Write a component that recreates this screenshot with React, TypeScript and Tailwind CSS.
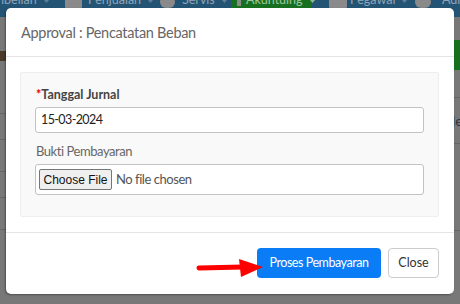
import React from "react";

function Caret() {
  return (
    <svg width="9" height="5" viewBox="0 0 10 6" className="inline-block ml-[5px]">
      <path d="M0 0 L10 0 L5 6 Z" fill="#5f7f99" />
    </svg>
  );
}

function NavText({ label }: { label: string }) {
  return (
    <div className="flex items-center -mt-[6px] text-[12.5px] leading-none text-[#8fa5b8]">
      {label}
      <Caret />
    </div>
  );
}

export default function App() {
  return (
    <div className="relative w-[460px] h-[304px] overflow-hidden bg-[#787878]" style={{ fontFamily: "Lato, 'Noto Sans', sans-serif" }}>
      {/* background page */}
      <div className="flex flex-col">
        <div className="h-[17px] bg-[#245474] flex items-start overflow-hidden">
          <div className="w-[85px] -ml-[20px] shrink-0"><NavText label="Pembelian" /></div>
          <div className="w-[23px] shrink-0"><div className="w-[17px] h-[10px] -mt-[2px] bg-[#8a8a8a] rounded-[1px]"></div></div>
          <div className="w-[72px] shrink-0"><NavText label="Penjualan" /></div>
          <div className="w-[22px] shrink-0"><div className="w-[15px] h-[12px] -mt-[4px] bg-[#8a8a8a] rounded-full"></div></div>
          <div className="w-[49px] shrink-0"><NavText label="Servis" /></div>
          <div className="w-[81px] shrink-0 h-[10px] bg-[#17701f] flex items-start pl-[6px]">
            <div className="w-[16px] h-[7px] -mt-[1px] border-[2px] border-t-0 border-[#8a8a8a] bg-[#2c7d2c]"></div>
            <div className="ml-[5px] flex items-center -mt-[6px] text-[12.5px] leading-none text-[#9fc79f]">
              Akuntuing
              <svg width="9" height="5" viewBox="0 0 10 6" className="inline-block ml-[5px]">
                <path d="M0 0 L10 0 L5 6 Z" fill="#8fb88f" />
              </svg>
            </div>
          </div>
          <div className="w-[38px] shrink-0 pl-[17px]"><div className="w-[18px] h-[10px] -mt-[2px] bg-[#8a8a8a] rounded-[1px]"></div></div>
          <div className="w-[65px] shrink-0"><NavText label="Pegawai" /></div>
          <div className="w-[27px] shrink-0"><div className="w-[16px] h-[12px] -mt-[4px] bg-[#8a8a8a] rounded-full"></div></div>
          <div className="shrink-0 -mt-[6px] text-[12.5px] leading-none text-[#8fa5b8]">Admin</div>
        </div>
        <div className="flex justify-between">
          <div className="w-[6px] flex flex-col">
            <div className="h-[34px]"></div>
            <div className="h-[10px] bg-[#4a3a2a]"></div>
            <div className="h-[52px]"></div>
            <div className="h-px bg-[#666]"></div>
            <div className="h-[25px]"></div>
            <div className="h-px bg-[#666]"></div>
            <div className="h-[31px]"></div>
            <div className="h-px bg-[#666]"></div>
            <div className="h-[25px]"></div>
            <div className="h-px bg-[#666]"></div>
            <div className="h-[31px]"></div>
            <div className="h-px bg-[#666]"></div>
          </div>
          <div className="w-[6px] flex flex-col text-[14px] text-[#333]">
            <div className="h-[23px]"></div>
            <div className="h-[30px] bg-[#17701f]"></div>
            <div className="h-[27px]"></div>
            <div className="h-px bg-[#666]"></div>
            <div className="h-[45px] flex items-center -ml-[2px]">le</div>
            <div className="h-px bg-[#666]"></div>
            <div className="h-[86px]"></div>
            <div className="h-px bg-[#666]"></div>
          </div>
        </div>
      </div>

      {/* modal */}
      <div className="absolute left-[6px] top-[8px] w-[448px] h-[286px] bg-white rounded-[5px] shadow-[-1px_1px_2px_rgba(0,0,0,0.35)] flex flex-col">
        <div className="h-[49px] border-b border-[#e5e5e5] px-[15px] flex items-center pt-[1px]">
          <span className="text-[14.5px] tracking-[-0.3px] text-[#666]">Approval : Pencatatan Beban</span>
        </div>
        <div className="pl-[14px] pr-[15px] pt-[15px] pb-[15px] border-b border-[#e5e5e5]">
          <div className="bg-[#f9f9f9] border border-[#eeeeee] rounded-[2px] px-[14px] pt-[12px] pb-[21px]">
            <div className="h-[20px] flex items-center text-[12.5px] font-bold text-[#444] pl-[1px]">
              <span className="text-[#e00]">*</span>Tanggal Jurnal
            </div>
            <div className="mt-[2px] h-[26px] bg-white border border-[#c2c2c2] rounded-[3px] flex items-center px-[5px] text-[12.5px] tracking-[-0.6px] text-[#222]">
              15-03-2024
            </div>
            <div className="mt-[9px] h-[20px] flex items-center text-[13px] tracking-[-0.45px] text-[#666] pl-[1px]">Bukti Pembayaran</div>
            <div className="mt-[2px] h-[31px] bg-white border border-[#c2c2c2] rounded-[3px] flex items-center px-[3px] text-[13px] tracking-[-0.45px] text-[#555]">
              <div className="h-[21px] w-[73px] flex items-center justify-center bg-[#efefef] border border-[#767676] rounded-[2px] text-[#111] text-[12px] tracking-normal" style={{ fontFamily: "'Liberation Sans', Arial, sans-serif" }}>
                Choose File
              </div>
              <span className="ml-[4px]">No file chosen</span>
            </div>
          </div>
        </div>
        <div className="flex-1 flex justify-end items-start pt-[15px] pr-[15px] gap-[7px]">
          <div className="h-[30px] w-[124px] bg-[#0a7cf5] rounded-[4px] text-white text-[12.5px] tracking-[-0.45px] flex items-center justify-center">
            Proses Pembayaran
          </div>
          <div className="h-[30px] w-[51px] bg-white border border-[#cccccc] rounded-[4px] text-[#333] text-[12.5px] flex items-center justify-center">
            Close
          </div>
        </div>
      </div>

      {/* red arrow */}
      <svg className="absolute left-[195px] top-[257px]" width="72" height="22" viewBox="0 0 72 22">
        <line x1="4" y1="11" x2="48" y2="10" stroke="#ff0000" strokeWidth="5" strokeLinecap="round" />
        <path d="M44 2 L68 10 L46 20 Z" fill="#ff0000" />
      </svg>
    </div>
  );
}
